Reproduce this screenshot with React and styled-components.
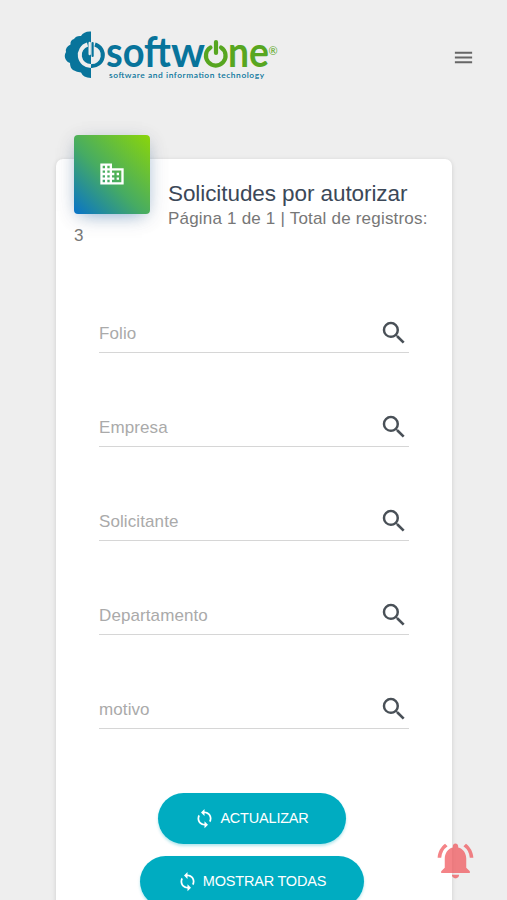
import React from "react";
import styled, { createGlobalStyle } from "styled-components";
import { MdSearch, MdDomain, MdLoop, MdMenu, MdNotificationsActive } from "react-icons/md";

const GlobalStyle = createGlobalStyle`
  *, *::before, *::after { box-sizing: border-box; }
  html, body { margin: 0; height: 100%; overflow: hidden; background: #eee; }
  body { font-family: "Liberation Sans", Arial, sans-serif; }
`;

const Page = styled.div`
  height: 900px;
  overflow: hidden;
  background: #eeeeee;
`;

const TopBar = styled.header`
  display: flex;
  align-items: center;
  justify-content: space-between;
  height: 114px;
  padding: 0 32px 0 60px;
`;

const LogoSvg = styled.svg`
  display: block;
  width: 224px;
  height: 60px;
`;

const MenuButton = styled.button`
  display: flex;
  padding: 0;
  border: 0;
  background: none;
  color: #666;
  font-size: 23px;
`;

const Card = styled.main`
  width: 396px;
  height: 780px;
  margin: 45px 0 0 56px;
  background: #fff;
  border-radius: 7px;
  box-shadow: 0 1px 5px rgba(0, 0, 0, 0.13);
`;

const CardHeader = styled.div`
  height: 127px;
  padding: 0 18px;
`;

const CardIcon = styled.div`
  float: left;
  display: flex;
  align-items: center;
  justify-content: center;
  width: 76px;
  height: 79px;
  margin: -24px 18px 0 0;
  padding-bottom: 1px;
  border-radius: 4px;
  color: #fff;
  font-size: 28px;
  background: linear-gradient(45deg, #0873c9 0%, #46ab63 45%, #8bd50a 100%);
  box-shadow: 0 5px 18px -8px rgba(0, 100, 200, 0.55), 0 4px 20px rgba(0, 0, 0, 0.12);
`;

const Title = styled.h1`
  margin: 0;
  padding: 20px 0 1px;
  color: #3c4858;
  font-size: 22.5px;
  letter-spacing: -0.08px;
  line-height: 29px;
  font-weight: 400;
`;

const Summary = styled.p`
  margin: 0;
  padding-top: 1px;
  color: #777;
  font-size: 17px;
  letter-spacing: 0.2px;
  line-height: 17px;
`;

const Filters = styled.form`
  display: flex;
  flex-direction: column;
  gap: 40px;
  padding: 13px 43px 0;
`;

const Field = styled.label`
  display: flex;
  align-items: center;
  justify-content: space-between;
  height: 54px;
  padding-top: 16px;
  border-bottom: 1px solid #d6d6d6;
  color: #aaa;
  font-size: 17px;
  letter-spacing: 0.1px;

  svg { margin-bottom: 2px; color: #495057; font-size: 30px; }
`;

const Actions = styled.div`
  display: flex;
  flex-direction: column;
  align-items: center;
  gap: 12px;
  padding: 64px 5px 0 0;
`;

const ActionButton = styled.button`
  display: flex;
  align-items: center;
  justify-content: center;
  gap: 5px;
  width: ${(p) => p.$width}px;
  height: 51px;
  padding: 0 0 1px;
  border: 0;
  border-radius: 26px;
  background: #00acc1;
  color: #fff;
  font-family: inherit;
  font-size: 14.5px;
  letter-spacing: -0.2px;
  box-shadow: 0 2px 3px rgba(0, 172, 193, 0.3);

  svg { font-size: 21px; }
`;

const Alerts = styled.button`
  position: fixed;
  right: 30px;
  bottom: 18px;
  display: flex;
  padding: 0;
  border: 0;
  background: none;
  color: #f04f54;
  opacity: 0.7;
  font-size: 43px;
`;

const BLUE = "#08749b";
const GREEN = "#57a620";

function Logo() {
  return (
    <LogoSvg viewBox="60 27 224 60" role="img" aria-label="softwone">
      <path
        fill={BLUE}
        d="M91 31.500Q84 31 81 36Q76 35.500 74 39Q70 40 70.500 44.500Q65 47 66 52Q63.500 56 66 60Q68 63 70 63Q70 68 73 70Q77 72 81 72.500Q83 77.500 91 78Z"
      />
      <path d="M87.500 44.500A11 11 0 0 0 91 66" fill="none" stroke="#eee" strokeWidth="4" />
      <path d="M95 44.500A11 11 0 0 1 91 66" fill="none" stroke={BLUE} strokeWidth="4" />
      <path d="M89.700 43V54" stroke="#eee" strokeWidth="2.400" strokeLinecap="round" />
      <path d="M92.600 43V56" stroke={BLUE} strokeWidth="2.200" strokeLinecap="round" />
      <g fontFamily="Lato, sans-serif" fontWeight="700" fontSize="42">
        <text x="106" y="67" fill={BLUE} textLength="65" lengthAdjust="spacingAndGlyphs">soft</text>
        <text x="171" y="67" fill={BLUE} textLength="34" lengthAdjust="spacingAndGlyphs">w</text>
        <text x="228" y="67" fill={GREEN} textLength="41" lengthAdjust="spacingAndGlyphs">ne</text>
      </g>
      <path d="M210.500 47.500A9.800 9.800 0 1 0 221 47.500M216 42V53" fill="none" stroke={GREEN} strokeWidth="4.200" strokeLinecap="round" />
      <text x="268.500" y="55" fill={GREEN} fontFamily="Lato, sans-serif" fontSize="11">®</text>
      <text x="109" y="78" fill={BLUE} fontFamily="Lato, sans-serif" fontWeight="600" fontSize="8.400" textLength="155">
        software and information technology
      </text>
    </LogoSvg>
  );
}

const fields = ["Folio", "Empresa", "Solicitante", "Departamento", "motivo"];

export default function App() {
  return (
    <Page>
      <GlobalStyle />
      <TopBar>
        <Logo />
        <MenuButton aria-label="Menú"><MdMenu /></MenuButton>
      </TopBar>
      <Card>
        <CardHeader>
          <CardIcon><MdDomain /></CardIcon>
          <Title>Solicitudes por autorizar</Title>
          <Summary>Página 1 de 1 | Total de registros: 3</Summary>
        </CardHeader>
        <Filters>
          {fields.map((name) => (
            <Field key={name}>{name}<MdSearch /></Field>
          ))}
        </Filters>
        <Actions>
          <ActionButton $width={188}><MdLoop />ACTUALIZAR</ActionButton>
          <ActionButton $width={224}><MdLoop />MOSTRAR TODAS</ActionButton>
        </Actions>
      </Card>
      <Alerts aria-label="Notificaciones"><MdNotificationsActive /></Alerts>
    </Page>
  );
}
